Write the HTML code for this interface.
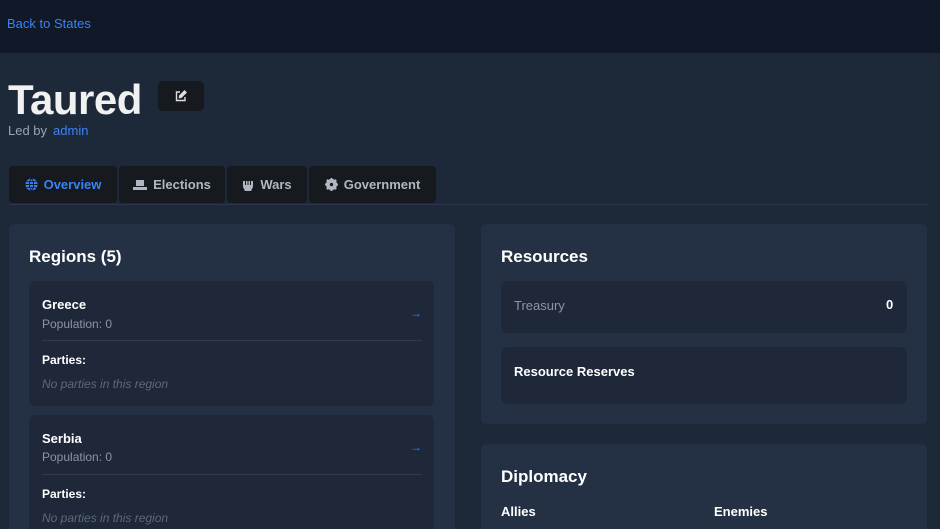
<!DOCTYPE html>
<html style="overflow:hidden;width:940px;height:529px"><head><meta charset="utf-8"><style>
*{margin:0;padding:0;box-sizing:border-box}
body{width:940px;height:529px;overflow:hidden;background:#1d2839;font-family:"Liberation Sans",sans-serif;color:#fff;position:relative}
.top{position:absolute;left:0;top:0;width:940px;height:53px;background:#111827}
.top a{position:absolute;left:7px;top:16px;font-size:13px;color:#3b82f6;text-decoration:none}
.abs{position:absolute}
h1{position:absolute;left:8px;top:76px;font-size:42px;font-weight:bold;color:#f1f1f1;letter-spacing:-0.5px}
.edit{left:158px;top:81px;width:46px;height:30px;background:#16191e;border-radius:5px}
.led{left:8px;top:123px;font-size:13px;color:#9aa4b2}
.led span{color:#3b82f6;margin-left:6px}
.tab{position:absolute;top:166px;height:37px;background:#16191e;border-radius:4px;display:flex;align-items:center;justify-content:center;font-size:13px;font-weight:bold;color:#b0b7c2}
.tab.act{color:#3b82f6}
.tab svg{margin-right:6px}
.rule{left:9px;top:204px;width:919px;height:1px;background:#2c384a}
.card{background:#243043;border-radius:6px}
.inner{background:#1e2838;border-radius:6px}
.h2{font-size:17px;font-weight:bold;color:#fff}
.b{font-size:13px;font-weight:bold}
.g{font-size:12px;color:#8b95a3}
.i{font-size:12px;color:#5d6878;font-style:italic}
.sep{height:1px;background:#2f3b4d}
.arrow{color:#3b82f6;font-size:12px}
</style></head><body>
<div class="top"><a>Back to States</a></div>
<h1>Taured</h1>
<div class="abs edit"><svg style="position:absolute;left:17px;top:9px" width="12" height="12" viewBox="0 0 12 12" fill="none" stroke="#ddd" stroke-width="1.4"><path d="M5 2H1.5v8.5H10V7"/><path d="M4.5 7.5l.3-1.8L9.5 1l1.5 1.5-4.7 4.7z" fill="#ddd"/></svg></div>
<div class="abs led">Led by<span>admin</span></div>
<div class="tab act" style="left:9px;width:108px"><svg width="13" height="13" viewBox="0 0 14 14"><circle cx="7" cy="7" r="6.5" fill="#3b82f6"/><path d="M0.5 7h13M7 .5c-3 3-3 10 0 13M7 .5c3 3 3 10 0 13M1.5 4h11M1.5 10h11" stroke="#16191e" stroke-width="1" fill="none"/></svg>Overview</div>
<div class="tab" style="left:119px;width:106px"><svg width="14" height="12" viewBox="0 0 14 12"><rect x="3" y="1" width="8" height="6" fill="#b0b7c2"/><rect x="0" y="8" width="14" height="3" fill="#b0b7c2"/></svg>Elections</div>
<div class="tab" style="left:227px;width:80px"><svg width="12" height="14" viewBox="0 0 12 14"><path d="M1 3h10v6l-2 4H3L1 9z" fill="#b0b7c2"/><path d="M3.5 3v4M6 3v4M8.5 3v4" stroke="#16191e"/></svg>Wars</div>
<div class="tab" style="left:309px;width:127px"><svg width="13" height="13" viewBox="0 0 14 14"><circle cx="7" cy="7" r="4.5" fill="none" stroke="#b0b7c2" stroke-width="3"/><path d="M7 0v14M0 7h14M2 2l10 10M12 2L2 12" stroke="#b0b7c2" stroke-width="2.2"/><circle cx="7" cy="7" r="1.8" fill="#16191e"/></svg>Government</div>
<div class="abs rule"></div>

<div class="abs card" style="left:9px;top:224px;width:446px;height:305px;border-radius:6px 6px 0 0"></div>
<div class="abs h2" style="left:29px;top:247px">Regions (5)</div>
<div class="abs inner" style="left:29px;top:281px;width:405px;height:125px"></div>
<div class="abs b" style="left:42px;top:297px">Greece</div>
<div class="abs g" style="left:42px;top:317px">Population: 0</div>
<div class="abs arrow" style="left:410px;top:306px">→</div>
<div class="abs sep" style="left:42px;top:340px;width:380px"></div>
<div class="abs b" style="left:42px;top:353px;font-size:12px">Parties:</div>
<div class="abs i" style="left:42px;top:377px">No parties in this region</div>
<div class="abs inner" style="left:29px;top:415px;width:405px;height:114px;border-radius:6px 6px 0 0"></div>
<div class="abs b" style="left:42px;top:431px">Serbia</div>
<div class="abs g" style="left:42px;top:450px">Population: 0</div>
<div class="abs arrow" style="left:410px;top:440px">→</div>
<div class="abs sep" style="left:42px;top:474px;width:380px"></div>
<div class="abs b" style="left:42px;top:487px;font-size:12px">Parties:</div>
<div class="abs i" style="left:42px;top:511px">No parties in this region</div>

<div class="abs card" style="left:481px;top:224px;width:446px;height:200px"></div>
<div class="abs h2" style="left:501px;top:247px">Resources</div>
<div class="abs inner" style="left:501px;top:281px;width:406px;height:52px"></div>
<div class="abs g" style="left:514px;top:298px;font-size:13px">Treasury</div>
<div class="abs b" style="left:886px;top:297px">0</div>
<div class="abs inner" style="left:501px;top:347px;width:406px;height:57px"></div>
<div class="abs b" style="left:514px;top:364px">Resource Reserves</div>

<div class="abs card" style="left:481px;top:444px;width:446px;height:85px;border-radius:6px 6px 0 0"></div>
<div class="abs h2" style="left:501px;top:467px">Diplomacy</div>
<div class="abs b" style="left:501px;top:504px">Allies</div>
<div class="abs b" style="left:714px;top:504px">Enemies</div>
</body></html>
